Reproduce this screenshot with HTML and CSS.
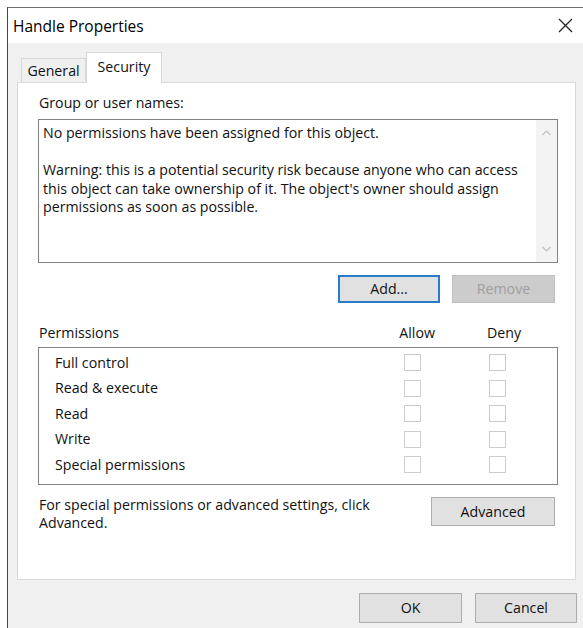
FILE: index.html
```html
<!DOCTYPE html>
<html lang="en">
<head>
<meta charset="utf-8">
<title>Handle Properties</title>
<link rel="stylesheet" href="styles.css">
</head>
<body>
<div class="window">
  <div class="titlebar">
    <span class="title">Handle Properties</span>
    <span class="close" aria-label="Close">
      <svg width="15" height="15" viewBox="0 0 15 15"><path d="M1 1 L14 14 M14 1 L1 14" stroke="#222" stroke-width="1.3" fill="none"/></svg>
    </span>
  </div>
  <div class="client">
    <div class="tabs">
      <div class="tab">General</div>
      <div class="tab active">Security</div>
    </div>
    <div class="panel">
      <div class="label">Group or user names:</div>
      <div class="listbox">
        <div class="list-text">
          <p>No permissions have been assigned for this object.</p>
          <p>Warning: this is a potential security risk because anyone who can access this object can take ownership of it. The object's owner should assign permissions as soon as possible.</p>
        </div>
        <div class="scrollbar">
          <span class="arrow"><svg width="9" height="6" viewBox="0 0 9 6"><path d="M0.5 5 L4.5 1 L8.5 5" stroke="#c2c2c2" stroke-width="1.2" fill="none"/></svg></span>
          <span class="arrow"><svg width="9" height="6" viewBox="0 0 9 6"><path d="M0.5 1 L4.5 5 L8.5 1" stroke="#c2c2c2" stroke-width="1.2" fill="none"/></svg></span>
        </div>
      </div>
      <div class="btn-row">
        <button class="btn btn-add default">Add...</button>
        <button class="btn btn-remove" disabled>Remove</button>
      </div>
      <div class="perm-head">
        <span>Permissions</span>
        <span>Allow</span>
        <span>Deny</span>
      </div>
      <div class="perm-box">
        <div class="perm-row"><span>Full control</span><span class="check"></span><span class="check"></span></div>
        <div class="perm-row"><span>Read &amp; execute</span><span class="check"></span><span class="check"></span></div>
        <div class="perm-row"><span>Read</span><span class="check"></span><span class="check"></span></div>
        <div class="perm-row"><span>Write</span><span class="check"></span><span class="check"></span></div>
        <div class="perm-row"><span>Special permissions</span><span class="check"></span><span class="check"></span></div>
      </div>
      <div class="footer">
        <p class="footer-text">For special permissions or advanced settings, click Advanced.</p>
        <button class="btn btn-advanced">Advanced</button>
      </div>
    </div>
    <div class="dialog-buttons">
      <button class="btn btn-ok">OK</button>
      <button class="btn btn-cancel">Cancel</button>
    </div>
  </div>
</div>
</body>
</html>
```
FILE: styles.css
```css
* { box-sizing: border-box; }

html, body {
  margin: 0;
  padding: 0;
  background: #ffffff;
}

body {
  font-family: "Segoe UI", "Open Sans", "Noto Sans", sans-serif;
  font-size: 14.2px;
  color: #111;
  overflow: hidden;
}

p { margin: 0; }

.window {
  margin: 7px 0 0 7px;
  height: 621px;
  border-top: 1px solid #707070;
  border-left: 1px solid #454545;
  background: #f0f0f0;
  display: flex;
  flex-direction: column;
}

/* title bar */
.titlebar {
  height: 35px;
  background: #ffffff;
  display: flex;
  align-items: center;
  justify-content: space-between;
  padding: 0 10px 0 5px;
}

.title {
  font-size: 15.5px;
  line-height: 18px;
  color: #000;
}

.close {
  display: flex;
  width: 15px;
  height: 15px;
}

/* dialog client area */
.client {
  flex: 1;
  display: flex;
  flex-direction: column;
  padding: 0 7px 0 9px;
}

.tabs {
  display: flex;
  align-items: flex-end;
  height: 30px;
  margin-top: 9px;
  padding-left: 4px;
}

.tab {
  height: 24px;
  width: 65px;
  border: 1px solid #d9d9d9;
  border-bottom: none;
  background: #f0f0f0;
  display: flex;
  align-items: center;
  justify-content: center;
  line-height: 18px;
  padding-top: 1px;
}

.tab.active {
  width: 76px;
  height: 31px;
  margin-bottom: -1px;
  background: #ffffff;
  position: relative;
  z-index: 1;
  padding: 0 0 2px;
}

.panel {
  height: 498px;
  background: #ffffff;
  border: 1px solid #d9d9d9;
  padding: 11px 17px 0 20px;
  display: flex;
  flex-direction: column;
  line-height: 18px;
}

.label { padding-left: 1px; }

/* names list */
.listbox {
  margin-top: 7px;
  height: 144px;
  border: 1px solid #828282;
  display: flex;
}

.list-text {
  flex: 1;
  padding: 4px 4px 0 4px;
  line-height: 18.5px;
}

.list-text p + p { margin-top: 18.5px; }

.scrollbar {
  width: 21px;
  background: #f3f3f3;
  display: flex;
  flex-direction: column;
  justify-content: space-between;
}

.arrow {
  height: 26px;
  display: flex;
  align-items: center;
  justify-content: center;
}

/* push buttons */
.btn {
  font: inherit;
  color: #111;
  background: #e1e1e1;
  border: 1px solid #adadad;
  padding: 0;
  line-height: 18px;
}

.btn.default {
  border: 2px solid #2b7bc8;
}

.btn:disabled {
  background: #cccccc;
  border-color: #bfbfbf;
  color: #a0a0a0;
}

.btn-row {
  margin-top: 12px;
  display: flex;
  justify-content: flex-end;
  gap: 12px;
  padding-right: 3px;
}

.btn-add { width: 102px; height: 28px; }
.btn-remove { width: 103px; height: 28px; }

/* permissions */
.perm-head {
  margin-top: 21px;
  display: grid;
  grid-template-columns: 1fr auto auto;
  column-gap: 52px;
  padding: 0 37px 0 1px;
}

.perm-box {
  margin-top: 5px;
  height: 138px;
  border: 1px solid #828282;
  padding-top: 2px;
}

.perm-row {
  height: 25.5px;
  display: grid;
  grid-template-columns: 1fr 17px 17px;
  column-gap: 68px;
  align-items: center;
  padding: 0 51px 0 16px;
}

.check {
  width: 17px;
  height: 17px;
  border: 1px solid #cccccc;
  background: #ffffff;
}

.footer {
  margin-top: 12px;
  display: flex;
  justify-content: space-between;
  align-items: flex-start;
  padding: 0 3px 0 1px;
}

.footer-text {
  width: 360px;
  margin-top: -1px;
}

.btn-advanced { width: 124px; height: 29px; }

/* OK / Cancel */
.dialog-buttons {
  margin-top: 13px;
  margin-right: -1px;
  display: flex;
  justify-content: flex-end;
  gap: 13px;
}

.btn-ok { width: 103px; height: 30px; }
.btn-cancel { width: 102px; height: 30px; }
```
